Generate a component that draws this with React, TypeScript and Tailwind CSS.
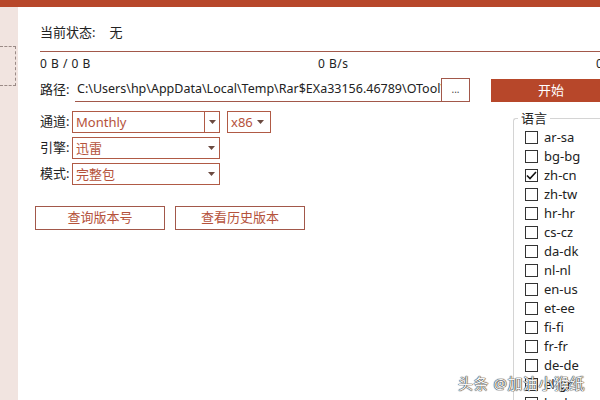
import React from "react";

const langs = [
  "ar-sa", "bg-bg", "zh-cn", "zh-tw", "hr-hr", "cs-cz", "da-dk", "nl-nl",
  "en-us", "et-ee", "fi-fi", "fr-fr", "de-de", "el-gr", "hu-hu",
];

const Arrow = () => (
  <svg width="7" height="4" viewBox="0 0 7 4" className="shrink-0">
    <path d="M0 0h7L3.5 4z" fill="#6b4a40" />
  </svg>
);

const Select = ({ label, value, split }: { label: string; value: string; split?: boolean }) => (
  <div className="flex items-center h-[22px]">
    <span className="w-[32px] text-[13px] text-[#222]">{label}</span>
    <div className="flex items-center w-[148px] h-[22px] border border-[#b05a45]">
      <span className="flex-1 pl-[3px] text-[13px] text-[#b5523b] leading-none">{value}</span>
      {split ? (
        <div className="flex items-center justify-center w-[15px] h-full border-l border-[#b05a45]">
          <Arrow />
        </div>
      ) : (
        <div className="flex items-center justify-center w-[15px] h-full">
          <Arrow />
        </div>
      )}
    </div>
  </div>
);

export default function App() {
  return (
    <div
      className="relative w-[600px] h-[400px] overflow-hidden bg-white flex flex-col"
      style={{ fontFamily: '"Noto Sans", "Noto Sans CJK SC", sans-serif' }}
    >
      <div className="h-[7px] shrink-0 bg-[#b7472a]" />
      <div className="flex flex-1 min-h-0">
        {/* left tab strip */}
        <div className="w-[18px] shrink-0 bg-[#f1e4e0] pt-[39px]">
          <div className="h-[40px] w-[16px] border border-dashed border-l-0 border-[#9a8a86]" />
        </div>

        {/* main */}
        <div className="flex-1 pl-[22px]">
          <div className="h-[44px] pt-[8px] flex items-center gap-[14px] text-[13px] text-[#222]">
            <span>当前状态:</span>
            <span>无</span>
          </div>
          <div className="h-px w-[580px] bg-[#a2584a]" />
          <div className="flex w-[580px] h-[24px] items-center text-[12px] text-[#222] tracking-[0.5px]">
            <span className="w-[278px]">0 B / 0 B</span>
            <span>0 B/s</span>
            <span className="ml-auto w-[24px]">0</span>
          </div>

          <div className="flex">
            {/* left column */}
            <div className="w-[451px] shrink-0">
              <div className="flex items-center h-[24px] mt-[2px]">
                <span className="w-[35px] text-[13px] text-[#222]">路径:</span>
                <div className="w-[366px] h-[24px] border-b border-[#a2584a] overflow-hidden whitespace-nowrap text-[12.5px] text-[#222] leading-[22px] pl-[2px]">
                  C:\Users\hp\AppData\Local\Temp\Rar$EXa33156.46789\OTool\
                </div>
                <div className="w-[29px] h-[24px] border border-[#a2584a] flex items-center justify-center text-[10px] text-[#444] pb-[2px]">
                  ...
                </div>
              </div>

              <div className="mt-[9px] flex flex-col gap-[4px]">
                <div className="flex items-center gap-[7px]">
                  <Select label="通道:" value="Monthly" split />
                  <div className="flex items-center w-[44px] h-[22px] border border-[#b05a45]">
                    <span className="flex-1 pl-[3px] text-[13px] text-[#b5523b] leading-none">x86</span>
                    <div className="w-[13px] flex items-center">
                      <Arrow />
                    </div>
                  </div>
                </div>
                <Select label="引擎:" value="迅雷" />
                <Select label="模式:" value="完整包" />
              </div>

              <div className="flex gap-[10px] mt-[21px] -ml-[5px]">
                <div className="w-[130px] h-[24px] border border-[#a2584a] flex items-center justify-center text-[13px] text-[#b5523b]">
                  查询版本号
                </div>
                <div className="w-[130px] h-[24px] border border-[#a2584a] flex items-center justify-center text-[13px] text-[#b5523b]">
                  查看历史版本
                </div>
              </div>
            </div>

            {/* right column */}
            <div className="shrink-0 w-[130px]">
              <div className="h-[23px] mt-[3px] bg-[#b7472a] flex items-center justify-center text-[13px] text-white w-[120px]">
                开始
              </div>
              <div className="relative mt-[16px] ml-[22px] border-l border-t border-[#d4d4d4] rounded-tl-[3px] pt-[9px] pl-[11px]">
                <span className="absolute -top-[9px] left-[4px] bg-white px-[3px] text-[13px] leading-[16px] text-[#222]">
                  语言
                </span>
                <div className="flex flex-col">
                  {langs.map((l) => (
                    <div key={l} className="flex items-center h-[19px] gap-[6px]">
                      <div className="w-[13px] h-[13px] border border-[#333] bg-white flex items-center justify-center">
                        {l === "zh-cn" && (
                          <svg width="11" height="9" viewBox="0 0 11 9">
                            <path d="M1 4.5l3 3L10 1" stroke="#111" strokeWidth="1.6" fill="none" />
                          </svg>
                        )}
                      </div>
                      <span className="text-[13px] text-[#222] leading-none">{l}</span>
                    </div>
                  ))}
                </div>
              </div>
            </div>
          </div>
        </div>
      </div>

      {/* watermark */}
      <div className="absolute left-[458px] top-[372px] text-[15px] text-[#f4f4f4] [text-shadow:0_0_1px_#333,0_0_1px_#333,0_0_1px_#333] tracking-[0.5px]">
        头条 @加油小猴纸
      </div>
    </div>
  );
}
